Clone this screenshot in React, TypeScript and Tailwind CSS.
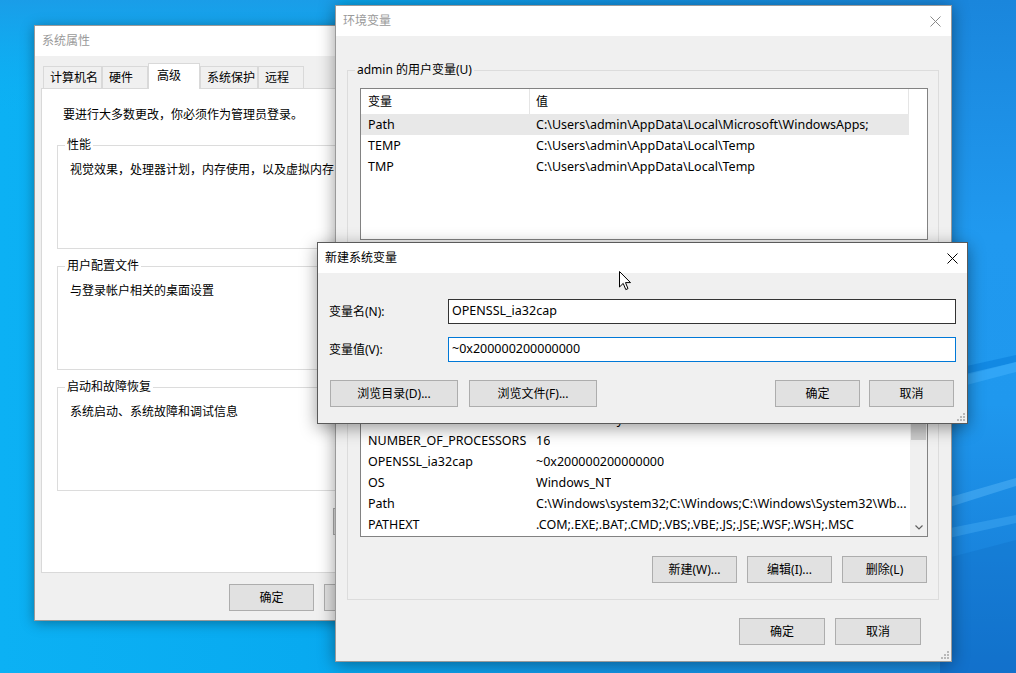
import React from "react";

const FONT = "font-['Noto_Sans','Noto_Sans_CJK_SC',sans-serif]";

function Btn({ className = "", children }: { className?: string; children?: React.ReactNode }) {
  return (
    <div
      className={`h-[27px] shrink-0 border border-[#adadad] bg-[#e1e1e1] flex items-center justify-center text-[12px] text-black ${className}`}
    >
      {children}
    </div>
  );
}

function CloseX({ color }: { color: string }) {
  return (
    <svg width="11" height="11" viewBox="0 0 11 11">
      <path d="M0.5 0.5 L10.5 10.5 M10.5 0.5 L0.5 10.5" stroke={color} strokeWidth="1" fill="none" />
    </svg>
  );
}

function Grip() {
  return (
    <svg width="9" height="9" viewBox="0 0 9 9" fill="#b8b8b8">
      <rect x="7" y="1" width="2" height="2" />
      <rect x="4" y="4" width="2" height="2" />
      <rect x="7" y="4" width="2" height="2" />
      <rect x="1" y="7" width="2" height="2" />
      <rect x="4" y="7" width="2" height="2" />
      <rect x="7" y="7" width="2" height="2" />
    </svg>
  );
}

function Group({
  label,
  className = "",
  children,
}: {
  label: string;
  className?: string;
  children?: React.ReactNode;
}) {
  return (
    <fieldset className={`border border-[#dcdcdc] min-w-0 ${className}`}>
      <legend className="ml-[7px] px-[2px] text-[12px] leading-[16px] min-h-[16px] text-black">{label}</legend>
      {children}
    </fieldset>
  );
}

function Row({ name, value, sel = false }: { name: string; value: string; sel?: boolean }) {
  return (
    <div className={`flex h-[21px] shrink-0 items-center pt-[2px] text-[12.5px] text-black ${sel ? "bg-[#e8e8e8]" : ""}`}>
      <div className="w-[169px] shrink-0 pl-[7px] whitespace-nowrap overflow-hidden">{name}</div>
      <div className="pl-[6px] whitespace-nowrap overflow-hidden">{value}</div>
    </div>
  );
}

function ListHeader({ blank = false }: { blank?: boolean }) {
  return (
    <div className="flex h-[25px] shrink-0 items-center text-[12px] text-black bg-white">
      <div className="w-[169px] h-full shrink-0 pl-[7px] flex items-center border-r border-[#e5e5e5]">
        {blank ? "" : "变量"}
      </div>
      <div className="flex-1 h-full pl-[6px] flex items-center border-r border-[#e5e5e5]">{blank ? "" : "值"}</div>
    </div>
  );
}

function Wallpaper() {
  return (
    <svg className="absolute inset-0" width="1016" height="673" viewBox="0 0 1016 673">
      <defs>
        <linearGradient id="wg" x1="0" y1="0" x2="1" y2="0">
          <stop offset="0" stopColor="#0cb1f4" />
          <stop offset="0.3" stopColor="#08aaf0" />
          <stop offset="0.62" stopColor="#1393e4" />
          <stop offset="1" stopColor="#1c87dc" />
        </linearGradient>
        <linearGradient id="wr" x1="0" y1="0" x2="0" y2="1">
          <stop offset="0" stopColor="#1a86dc" />
          <stop offset="0.35" stopColor="#2099ef" />
          <stop offset="0.6" stopColor="#1f98ee" />
          <stop offset="1" stopColor="#1474cf" />
        </linearGradient>
        <linearGradient id="wt" x1="0" y1="0" x2="0" y2="1">
          <stop offset="0" stopColor="#1a9de8" />
          <stop offset="1" stopColor="#0cb1f4" stopOpacity="0" />
        </linearGradient>
      </defs>
      <rect width="1016" height="673" fill="url(#wg)" />
      <rect x="0" y="0" width="340" height="120" fill="url(#wt)" />
      <rect x="940" y="0" width="76" height="673" fill="url(#wr)" />
      <polygon points="940,372 1016,355 1016,362 940,382" fill="#0a7fdc" opacity="0.6" />
      <polygon points="940,380 1016,362 1016,372 940,392" fill="#48b6ff" opacity="0.45" />
      <polygon points="940,500 1016,478 1016,486 940,510" fill="#6cc6ff" opacity="0.35" />
      <polygon points="940,530 1016,515 1016,523 940,540" fill="#5bbcff" opacity="0.3" />
      <polygon points="940,560 1016,540 1016,673 940,673" fill="#0d66c0" opacity="0.25" />
    </svg>
  );
}

function Cursor() {
  return (
    <svg className="absolute left-[619px] top-[271px]" width="13" height="20" viewBox="0 0 13 20">
      <path
        d="M0.5 0.5 L0.5 16 L4.2 12.4 L6.8 18.6 L9 17.6 L6.5 11.6 L11.5 11.6 Z"
        fill="#ffffff"
        stroke="#000000"
        strokeWidth="1"
        strokeLinejoin="round"
      />
    </svg>
  );
}

function SystemProperties() {
  const tabs = [
    { t: "计算机名", w: "w-[59px]" },
    { t: "硬件", w: "w-[46px]" },
    { t: "高级", w: "w-[52px]", sel: true },
    { t: "系统保护", w: "w-[58px]" },
    { t: "远程", w: "w-[46px]" },
  ];
  return (
    <div className="absolute left-[34px] top-[25px] w-[480px] h-[596px] bg-[#f0f0f0] border border-[#9a9a9a] shadow-[0_2px_12px_rgba(0,0,0,0.35)] flex flex-col">
      <div className="h-[30px] shrink-0 bg-white flex items-center pl-[7px] text-[12px] text-[#9a9a9a]">系统属性</div>
      <div className="flex-1 flex flex-col px-[6px]">
        <div className="mt-[7px] h-[26px] -mb-px flex items-end pl-[2px]">
          {tabs.map((tab) =>
            tab.sel ? (
              <div
                key={tab.t}
                className={`${tab.w} h-[26px] relative z-10 bg-white border-l border-t border-r border-[#d9d9d9] flex items-center pl-[8px] pb-[2px] text-[12px] text-black`}
              >
                {tab.t}
              </div>
            ) : (
              <div
                key={tab.t}
                className={`${tab.w} h-[23px] bg-[#f0f0f0] border border-[#d9d9d9] flex items-center pl-[6px] text-[12px] text-black`}
              >
                {tab.t}
              </div>
            )
          )}
        </div>
        <div className="h-[485px] shrink-0 bg-white border border-[#d9d9d9] flex flex-col pt-[18px]">
          <div className="pl-[21px] text-[12px] leading-[16px] text-black whitespace-nowrap">
            要进行大多数更改，你必须作为管理员登录。
          </div>
          <Group label="性能" className="mx-[15px] mt-[14px] h-[112px]">
            <div className="pl-[12px] pt-[9px] text-[12px] leading-[16px] whitespace-nowrap">
              视觉效果，处理器计划，内存使用，以及虚拟内存
            </div>
          </Group>
          <Group label="用户配置文件" className="mx-[15px] mt-[9px] h-[112px]">
            <div className="pl-[12px] pt-[9px] text-[12px] leading-[16px] whitespace-nowrap">与登录帐户相关的桌面设置</div>
          </Group>
          <Group label="启动和故障恢复" className="mx-[15px] mt-[9px] h-[112px]">
            <div className="pl-[12px] pt-[9px] text-[12px] leading-[16px] whitespace-nowrap">系统启动、系统故障和调试信息</div>
          </Group>
          <div className="flex justify-end mx-[15px] mt-[17px] pr-[58px]">
            <Btn className="w-[100px]" />
          </div>
        </div>
        <div className="flex justify-end gap-[10px] mt-[11px] pr-[3px]">
          <Btn className="w-[85px]">确定</Btn>
          <Btn className="w-[85px]" />
          <Btn className="w-[85px]" />
        </div>
      </div>
    </div>
  );
}

function EnvVars() {
  return (
    <div className="absolute left-[335px] top-[5px] w-[617px] h-[657px] bg-[#f0f0f0] border border-[#9a9a9a] shadow-[0_2px_16px_rgba(0,0,0,0.4)] flex flex-col">
      <div className="h-[30px] shrink-0 bg-white flex items-center justify-between pl-[7px] pr-[10px] text-[12px] text-[#9a9a9a]">
        <span>环境变量</span>
        <CloseX color="#8a8a8a" />
      </div>
      <div className="flex-1 flex flex-col pl-[11px] pr-[12px] pt-[26px]">
        <Group label="admin 的用户变量(U)" className="h-[242px] shrink-0">
          <div className="pl-[12px] pr-[10px] pt-[10px]">
            <div className="h-[152px] bg-white border border-[#828282] flex">
              <div className="flex-1 flex flex-col">
                <ListHeader />
                <Row name="Path" value="C:\Users\admin\AppData\Local\Microsoft\WindowsApps;" sel />
                <Row name="TEMP" value="C:\Users\admin\AppData\Local\Temp" />
                <Row name="TMP" value="C:\Users\admin\AppData\Local\Temp" />
              </div>
              <div className="w-[18px] shrink-0" />
            </div>
            <div className="flex justify-end gap-[10px] mt-[19px] pr-[1px]">
              <Btn className="w-[85px]" />
              <Btn className="w-[85px]" />
              <Btn className="w-[85px]" />
            </div>
          </div>
        </Group>
        <Group label="" className="h-[285px] shrink-0 mt-[11px]">
          <div className="pl-[12px] pr-[10px] pt-[10px]">
            <div className="h-[196px] bg-white border border-[#828282] flex">
              <div className="flex-1 flex flex-col overflow-hidden">
                <ListHeader blank />
                <Row name="" value="" />
                <Row name="" value="" />
                <Row name="" value="C:\Windows\System32\Drivers\DriverData" />
                <Row name="NUMBER_OF_PROCESSORS" value="16" />
                <Row name="OPENSSL_ia32cap" value="~0x200000200000000" />
                <Row name="OS" value="Windows_NT" />
                <Row name="Path" value="C:\Windows\system32;C:\Windows;C:\Windows\System32\Wb..." />
                <Row name="PATHEXT" value=".COM;.EXE;.BAT;.CMD;.VBS;.VBE;.JS;.JSE;.WSF;.WSH;.MSC" />
              </div>
              <div className="w-[17px] shrink-0 bg-[#f0f0f0] flex flex-col items-center">
                <div className="h-[17px] shrink-0 flex items-center justify-center">
                  <svg width="8" height="5" viewBox="0 0 8 5">
                    <path d="M0.5 4.5 L4 1 L7.5 4.5" stroke="#606060" strokeWidth="1.2" fill="none" />
                  </svg>
                </div>
                <div className="mt-[41px] w-[15px] h-[40px] bg-[#cdcdcd]" />
                <div className="flex-1" />
                <div className="h-[17px] shrink-0 flex items-center justify-center">
                  <svg width="8" height="5" viewBox="0 0 8 5">
                    <path d="M0.5 0.5 L4 4 L7.5 0.5" stroke="#606060" strokeWidth="1.2" fill="none" />
                  </svg>
                </div>
              </div>
            </div>
            <div className="flex justify-end gap-[10px] mt-[19px] pr-[1px]">
              <Btn className="w-[85px]">新建(W)...</Btn>
              <Btn className="w-[85px]">编辑(I)...</Btn>
              <Btn className="w-[85px]">删除(L)</Btn>
            </div>
          </div>
        </Group>
        <div className="flex justify-end gap-[10px] mt-[18px] pr-[18px]">
          <Btn className="w-[86px]">确定</Btn>
          <Btn className="w-[86px]">取消</Btn>
        </div>
        <div className="flex-1 flex items-end justify-end -mr-[10px] pb-[2px]">
          <Grip />
        </div>
      </div>
    </div>
  );
}

function NewVar() {
  return (
    <div className="absolute left-[317px] top-[242px] w-[651px] h-[182px] bg-[#f0f0f0] border border-[#5a5a5a] shadow-[0_4px_16px_rgba(0,0,0,0.4)] flex flex-col">
      <div className="h-[30px] shrink-0 bg-white flex items-center justify-between pl-[7px] pr-[9px] text-[12px] text-black">
        <span>新建系统变量</span>
        <CloseX color="#000000" />
      </div>
      <div className="flex-1 flex flex-col pt-[26px] pl-[11px] pr-[11px]">
        <div className="flex items-center h-[25px]">
          <div className="w-[119px] shrink-0 text-[12px] text-black">变量名(N):</div>
          <div className="flex-1 h-[25px] bg-white border border-[#333333] flex items-center pl-[3px] text-[12.5px] text-black">
            OPENSSL_ia32cap
          </div>
        </div>
        <div className="flex items-center h-[25px] mt-[13px]">
          <div className="w-[119px] shrink-0 text-[12px] text-black">变量值(V):</div>
          <div className="flex-1 h-[25px] bg-white border border-[#0078d7] flex items-center pl-[3px] text-[12.5px] text-black">
            ~0x200000200000000
          </div>
        </div>
        <div className="flex items-center mt-[18px] pl-[1px] pr-[2px]">
          <Btn className="w-[128px]">浏览目录(D)...</Btn>
          <Btn className="w-[128px] ml-[11px]">浏览文件(F)...</Btn>
          <div className="flex-1" />
          <Btn className="w-[85px]">确定</Btn>
          <Btn className="w-[85px] ml-[9px]">取消</Btn>
        </div>
        <div className="flex-1 flex items-end justify-end -mr-[9px] pb-[2px]">
          <Grip />
        </div>
      </div>
    </div>
  );
}

export default function App() {
  return (
    <div className={`relative w-[1016px] h-[673px] overflow-hidden ${FONT}`}>
      <Wallpaper />
      <SystemProperties />
      <EnvVars />
      <NewVar />
      <Cursor />
    </div>
  );
}
